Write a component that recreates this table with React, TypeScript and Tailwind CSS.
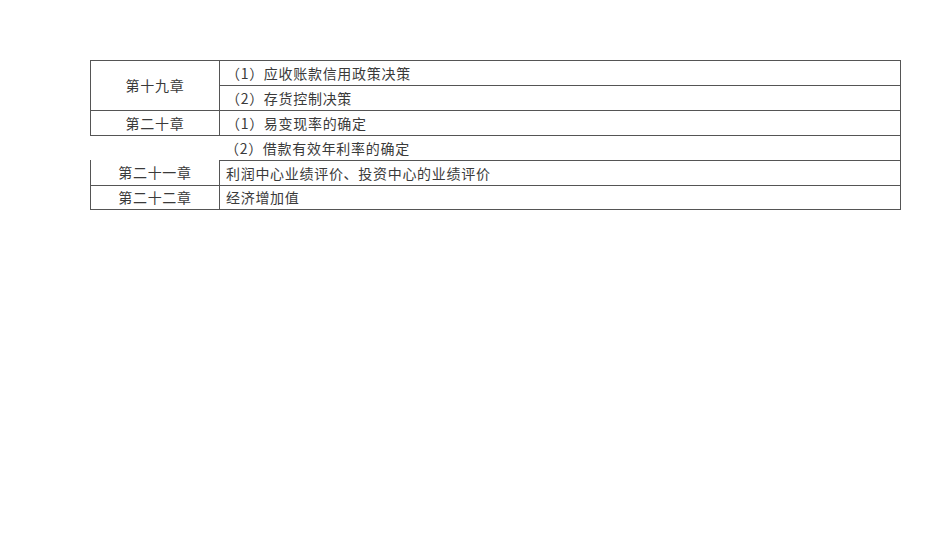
const cell = "h-[25px] border-[#555] flex items-center text-[14px] tracking-[0.7px] text-[#3a3a3a]";

export default function App() {
  return (
    <div
      className="w-[950px] h-[555px] bg-white pt-[60px] pl-[90px]"
      style={{ fontFamily: '"Noto Sans CJK SC", "Noto Sans CJK JP", sans-serif' }}
    >
      <div className="grid grid-cols-[129px_682px] grid-rows-[repeat(6,25px)]">
        <div className={`${cell} row-span-2 h-[50px] border-l border-t justify-center`}>第十九章</div>
        <div className={`${cell} border-l border-t border-r pl-[6px]`}>（1）应收账款信用政策决策</div>
        <div className={`${cell} border-l border-t border-r pl-[6px]`}>（2）存货控制决策</div>

        <div className={`${cell} border-l border-t justify-center`}>第二十章</div>
        <div className={`${cell} border-l border-t border-r pl-[6px]`}>（1）易变现率的确定</div>

        <div className={`${cell} border-t`} />
        <div className={`${cell} border-t border-r pl-[6px]`}>（2）借款有效年利率的确定</div>

        <div className={`${cell} border-l justify-center`}>第二十一章</div>
        <div className={`${cell} border-l border-t border-r pl-[6px]`}>利润中心业绩评价、投资中心的业绩评价</div>

        <div className={`${cell} border-l border-t border-b justify-center`}>第二十二章</div>
        <div className={`${cell} border-l border-t border-r border-b pl-[6px]`}>经济增加值</div>
      </div>
    </div>
  );
}
